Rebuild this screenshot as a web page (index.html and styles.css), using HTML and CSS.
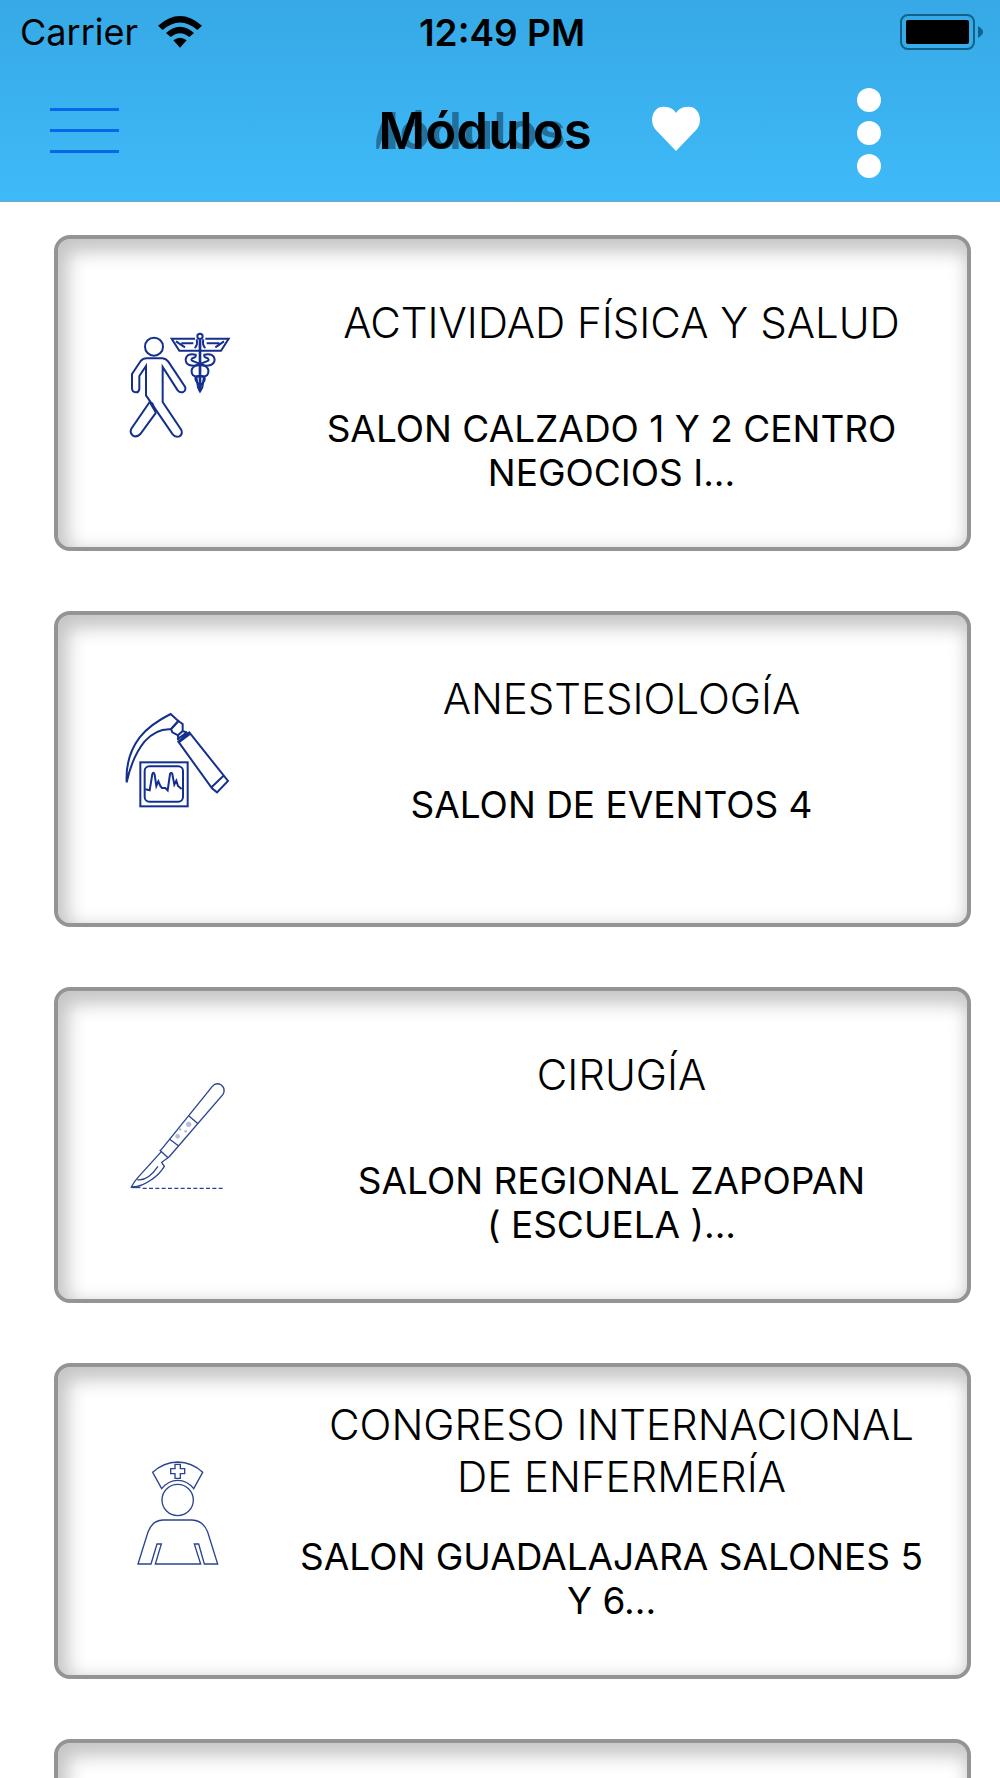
FILE: index.html
```html
<!DOCTYPE html>
<html lang="es">
<head>
  <meta charset="UTF-8" />
  <meta name="viewport" content="width=device-width, initial-scale=1.0"/>
  <title>Módulos</title>
  <link rel="stylesheet" href="styles.css">
</head>
<body>
  <header class="header">
    <div class="status-bar">
      <div class="carrier">
        <span>Carrier</span>
        <svg class="wifi" viewBox="0 0 132 96" aria-hidden="true">
          <path d="M0 29 Q66 -29 132 29 L118 42 Q66 -3 14 42Z"/>
          <path d="M24 51 Q66 14 108 51 L94 63 Q66 40 38 63Z"/>
          <path d="M46 73 Q66 57 86 73 L66 95Z"/>
        </svg>
      </div>
      <span class="time">12:49 PM</span>
      <svg class="battery" viewBox="0 0 84 36" aria-hidden="true">
        <rect x="1" y="1" width="73" height="34" rx="7" fill="none" stroke="#10628c" stroke-width="2"/>
        <rect x="6" y="6" width="63" height="24" rx="2"/>
        <path d="M78 12 Q83 15 83 18 Q83 21 78 24Z" fill="#10628c"/>
      </svg>
    </div>

    <nav class="nav-bar">
      <button class="menu-btn" aria-label="Menú">
        <span></span>
        <span></span>
        <span></span>
      </button>
      <h1>Módulos</h1>
      <div class="actions">
        <button class="icon-btn" aria-label="Favoritos">
          <svg class="heart" viewBox="0 0 48 45" aria-hidden="true">
            <path d="M24 45 L3 23 Q0 19 0 14 Q0 6 6 2 Q10 0 15 1 Q21 2 24 7 Q27 2 33 1 Q38 0 42 2 Q48 6 48 14 Q48 19 45 23Z"/>
          </svg>
        </button>
        <button class="icon-btn" aria-label="Más opciones">
          <svg class="dots" viewBox="0 0 24 90" aria-hidden="true">
            <circle cx="12" cy="12" r="12"/>
            <circle cx="12" cy="45" r="12"/>
            <circle cx="12" cy="78" r="12"/>
          </svg>
        </button>
      </div>
    </nav>
  </header>

  <main class="modules">
    <a class="card" href="#actividad">
      <svg class="card-icon" viewBox="0 0 420 390" aria-hidden="true">
        <circle cx="132" cy="80" r="27"/>
        <path d="M110 115 H158 Q168 116 175 125 L225 200 Q229 211 220 216 Q209 219 203 211 L158 141 V246 L214 330 Q219 343 208 349 Q196 353 188 343 L108 226 V138 L88 168 V207 Q86 218 77 217 Q66 216 66 205 V162 L92 123 Q99 115 110 115Z"/>
        <path d="M119 246 L64 326 Q58 339 70 348 Q82 352 91 342 L138 278"/>
        <path d="M119 246 L138 278 L126 248 M108 146 V220" />
        <path d="M255 56 H185 L208 92 H333 L356 56 H286 M198 64 L225 82 M342 64 L316 82 M214 70 H250 M290 70 H328"/>
        <path d="M270 60 V214" stroke-width="8"/>
        <circle cx="270" cy="49" r="8"/>
        <path d="M260 58 Q264 76 254 84 M280 58 Q276 76 286 84"/>
        <path d="M270 135 Q228 143 227 119 Q229 98 257 104 Q260 112 247 115 Q240 121 251 124 L286 138 Q302 150 291 166 Q282 173 270 168 Q250 166 259 184 L270 198"/>
        <path d="M270 135 Q312 143 314 119 Q311 98 283 104 Q280 112 293 115 Q300 121 290 124 L254 138 Q238 150 249 166 Q258 173 270 168 Q290 166 282 184 L270 198"/>
        <path d="M259 170 L264 202 L270 214 L277 202 L282 170"/>
      </svg>
      <div class="card-text">
        <h2>ACTIVIDAD FÍSICA Y SALUD</h2>
        <p>SALON CALZADO 1 Y 2 CENTRO NEGOCIOS I...</p>
      </div>
    </a>

    <a class="card" href="#anestesiologia">
      <svg class="card-icon" viewBox="0 -12 420 390" aria-hidden="true">
        <path d="M182 42 Q120 73 89 112 Q46 169 50 247 Q67 169 104 124 Q140 85 183 88 L205 63Z"/>
        <path d="M205 63 L218 72 L218 93 L204 106 L187 97 L183 87Z M218 93 L231 98 M204 106 L205 121"/>
        <path d="M205 125 L238 97 L354 243 L321 277 L306 265Z M306 260 L339 229 M202 118 L232 96 M208 126 L241 101"/>
        <rect x="91" y="187" width="142" height="132"/>
        <rect x="104" y="199" width="115" height="106" rx="14"/>
        <path d="M106 268 L119 271 L127 222 Q130 214 134 224 L139 258 L145 244 L151 258 L156 264 H166 L173 271 L180 222 Q184 214 187 222 L193 254 L199 242 L204 258 L215 267"/>
      </svg>
      <div class="card-text">
        <h2>ANESTESIOLOGÍA</h2>
        <p>SALON DE EVENTOS 4</p>
      </div>
    </a>

    <a class="card" href="#cirugia">
      <svg class="card-icon thin" viewBox="0 6 420 390" aria-hidden="true">
        <path d="M152 241 L307 49 Q318 36 334 45 Q348 57 339 73 L177 261"/>
        <path d="M149 240 L174 263 M178 207 L206 228 M237 138 L264 161" stroke-width="4"/>
        <path d="M154 245 L86 320 Q72 335 64 351 Q94 352 126 328 Q149 312 163 289 L155 277 L177 261"/>
        <path d="M82 329 Q113 334 144 289"/>
        <path d="M64 352 L91 352" stroke-width="5"/>
        <path d="M98 355 H344" stroke-width="4" stroke-dasharray="12 7"/>
        <g class="grip">
          <circle cx="203" cy="199" r="7"/>
          <circle cx="236" cy="163" r="8"/>
          <circle cx="227" cy="184" r="4"/>
          <circle cx="210" cy="178" r="4"/>
        </g>
      </svg>
      <div class="card-text">
        <h2>CIRUGÍA</h2>
        <p>SALON REGIONAL ZAPOPAN (&nbsp;ESCUELA&nbsp;)...</p>
      </div>
    </a>

    <a class="card" href="#enfermeria">
      <svg class="card-icon thin" viewBox="-30 9 420 390" aria-hidden="true">
        <path d="M125 131 L98 82 Q130 52 173 51 Q217 52 248 82 L221 131 Q202 106 173 106 Q145 106 125 131Z"/>
        <path d="M165 58 H181 V71 H194 V86 H181 V100 H165 V86 H152 V71 H165Z" stroke-width="4"/>
        <circle cx="173" cy="165" r="47"/>
        <path d="M54 357 L84 261 Q97 226 129 225 H216 Q249 226 263 261 L293 357 H253 L236 297 H223 L242 357 H106 L124 297 H111 L93 357Z"/>
      </svg>
      <div class="card-text">
        <h2>CONGRESO INTERNACIONAL DE ENFERMERÍA</h2>
        <p>SALON GUADALAJARA SALONES 5 Y 6...</p>
      </div>
    </a>

    <!-- next module, continues below the fold -->
    <a class="card" href="#siguiente" aria-label="Siguiente módulo"></a>
  </main>
</body>
</html>
```

FILE: styles.css
```css
* {
  box-sizing: border-box;
}
html, body {
  margin: 0;
  padding: 0;
  height: 100%;
  font-family: Inter, "Liberation Sans", sans-serif;
  color: #000;
  background-color: #fff;
}
body {
  display: flex;
  flex-direction: column;
}
h1, h2, p {
  margin: 0;
}
button {
  padding: 0;
  border: none;
  background: none;
  cursor: pointer;
}
svg {
  display: block;
}

/* header */
.header {
  flex: none;
  background: linear-gradient(#36a9e6, #3fbaf8);
  border-bottom: 1px solid #7f9fb2;
}
.status-bar {
  display: grid;
  grid-template-columns: 1fr auto 1fr;
  align-items: center;
  height: 64px;
  padding: 0 16px 0 20px;
  font-size: 36px;
}
.carrier {
  display: flex;
  align-items: center;
  gap: 20px;
}
.wifi {
  width: 44px;
  height: 32px;
}
.time {
  font-size: 37px;
  font-weight: 600;
}
.battery {
  width: 84px;
  height: 36px;
  justify-self: end;
}
.nav-bar {
  display: grid;
  grid-template-columns: 1fr auto 1fr;
  align-items: center;
  height: 137px;
  padding: 0 80px 0 50px;
}
.menu-btn {
  display: flex;
  flex-direction: column;
  gap: 18px;
  width: 69px;
  margin-bottom: 4px;
}
.menu-btn span {
  height: 3px;
  background: #0468e8;
}
.nav-bar h1 {
  margin-bottom: 4px;
  font-size: 51px;
  font-weight: 600;
  text-shadow: -26px 0 rgba(0, 20, 40, 0.42);
  clip-path: inset(-8px -8px -8px -2px);
}
.actions {
  display: flex;
  align-items: center;
  justify-content: space-between;
  padding: 0 39px 0 60px;
}
.icon-btn svg {
  fill: #fff;
}
.heart {
  width: 48px;
  height: 45px;
  margin-bottom: 8px;
}
.dots {
  width: 24px;
  height: 90px;
}

/* module list */
.modules {
  display: flex;
  flex-direction: column;
  gap: 60px;
  padding: 33px 29px 33px 54px;
}
.card {
  display: flex;
  flex: none;
  align-items: flex-start;
  gap: 44px;
  min-height: 316px;
  padding: 32px 38px 32px 52px;
  border: 4px solid #949494;
  border-radius: 16px;
  box-shadow: inset 5px 8px 18px 5px #c6c6c6;
  color: #000;
  text-align: center;
  text-decoration: none;
}
.card-icon {
  flex: none;
  width: 140px;
  height: 130px;
  margin-top: 49px;
  fill: none;
  stroke: #14308c;
  stroke-width: 6;
}
.card-icon.thin {
  stroke: #2a4590;
  stroke-width: 4;
}
.grip circle {
  fill: #b3bddd;
  stroke: none;
}
.card-text {
  flex: 1;
}
.card h2 {
  display: flex;
  align-items: center;
  justify-content: center;
  min-height: 104px;
  padding-left: 20px;
  font-size: 42px;
  font-weight: 300;
  line-height: 52px;
}
.card p {
  margin-top: 32px;
  font-size: 37px;
  line-height: 44px;
}
```
